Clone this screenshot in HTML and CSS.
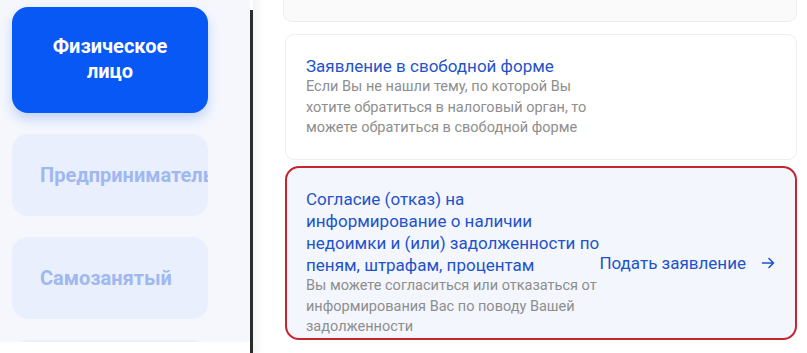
FILE: index.html
```html
<!DOCTYPE html>
<html lang="ru">
<head>
<meta charset="utf-8">
<title>Заявления</title>
<link rel="stylesheet" href="styles.css">
</head>
<body>
<div class="page">
  <aside class="sidebar">
    <div class="side-btn active">Физическое<br>лицо</div>
    <div class="side-btn">Предприниматель</div>
    <div class="side-btn">Самозанятый</div>
    <div class="side-btn"></div>
  </aside>
  <div class="divider"></div>
  <main class="content">
    <div class="card card-prev"></div>
    <div class="card">
      <div class="text-col">
        <div class="card-title">Заявление в свободной форме</div>
        <div class="card-desc">Если Вы не нашли тему, по которой Вы хотите обратиться в налоговый орган, то можете обратиться в свободной форме</div>
      </div>
    </div>
    <div class="card card-marked">
      <div class="text-col">
        <div class="card-title">Согласие (отказ) на информирование о наличии недоимки и (или) задолженности по пеням, штрафам, процентам</div>
        <div class="card-desc">Вы можете согласиться или отказаться от информирования Вас по поводу Вашей задолженности</div>
      </div>
      <div class="action">
        <span>Подать заявление</span>
        <svg class="arrow" width="14" height="14" viewBox="0 0 14 14" aria-hidden="true"><path d="M1.5 7H12.5M8 2.5L12.5 7L8 11.5" fill="none" stroke="#1f53c9" stroke-width="1.6" stroke-linecap="round" stroke-linejoin="round"/></svg>
      </div>
    </div>
  </main>
</div>
</body>
</html>
```
FILE: styles.css
```css
* { box-sizing: border-box; }
html, body { margin: 0; padding: 0; background: #ffffff; }
body {
  font-family: Roboto, "Noto Sans", "Liberation Sans", sans-serif;
  width: 807px;
  height: 353px;
  overflow: hidden;
}
.page {
  display: flex;
  height: 353px;
}
.sidebar {
  flex: 0 0 250px;
  height: 342px;
  overflow: hidden;
  background: #f5f7fd;
  padding: 7px 0 0 12px;
  display: flex;
  flex-direction: column;
  gap: 21px;
}
.side-btn {
  flex: 0 0 auto;
  width: 196px;
  height: 82px;
  border-radius: 16px;
  background: #e9effd;
  color: #a0b8f0;
  font-weight: 700;
  font-size: 20px;
  line-height: 25px;
  display: flex;
  align-items: center;
  padding-left: 28px;
  white-space: nowrap;
  overflow: hidden;
}
.side-btn.active {
  height: 106px;
  background: #0858f6;
  color: #ffffff;
  justify-content: center;
  text-align: center;
  padding-left: 0;
  padding-bottom: 2px;
  box-shadow: 0 6px 12px rgba(8, 88, 246, 0.22);
}
.divider {
  flex: 0 0 3px;
  margin-top: 10px;
  background: #2b2b2b;
}
.content {
  flex: 1;
  padding: 0 10px 0 32px;
  display: flex;
  flex-direction: column;
  gap: 6px;
  background: linear-gradient(to right, #f3f4f6 0, #ffffff 10px);
}
.card {
  flex: 0 0 auto;
  background: #ffffff;
  border: 1px solid #eceef2;
  border-radius: 9px;
  padding: 20px 20px 20px 20px;
  display: flex;
  align-items: center;
}
.card-prev {
  height: 23px;
  margin-top: -1px;
  margin-left: -2px;
  margin-bottom: 6px;
  padding: 0;
  background: #fafafa;
  border-top: none;
  border-radius: 0 0 9px 9px;
}
.text-col {
  flex: 0 1 296px;
}
.card-title {
  color: #1f53c9;
  font-size: 17px;
  line-height: 22px;
}
.card-marked .text-col {
  flex-basis: 300px;
}
.card-desc {
  color: #8e8e8e;
  font-size: 14.5px;
  line-height: 20.5px;
}
.card-marked {
  height: 174px;
  border: 2px solid #c7242f;
  border-radius: 14px;
  background: #f3f6fd;
  padding: 21px 20px 0 19px;
  align-items: center;
}
.action {
  margin-left: auto;
  flex: 0 0 auto;
  white-space: nowrap;
  display: flex;
  align-items: center;
  gap: 15px;
  color: #1f53c9;
  font-size: 17px;
  line-height: 22px;
}
.arrow { display: block; }
```
